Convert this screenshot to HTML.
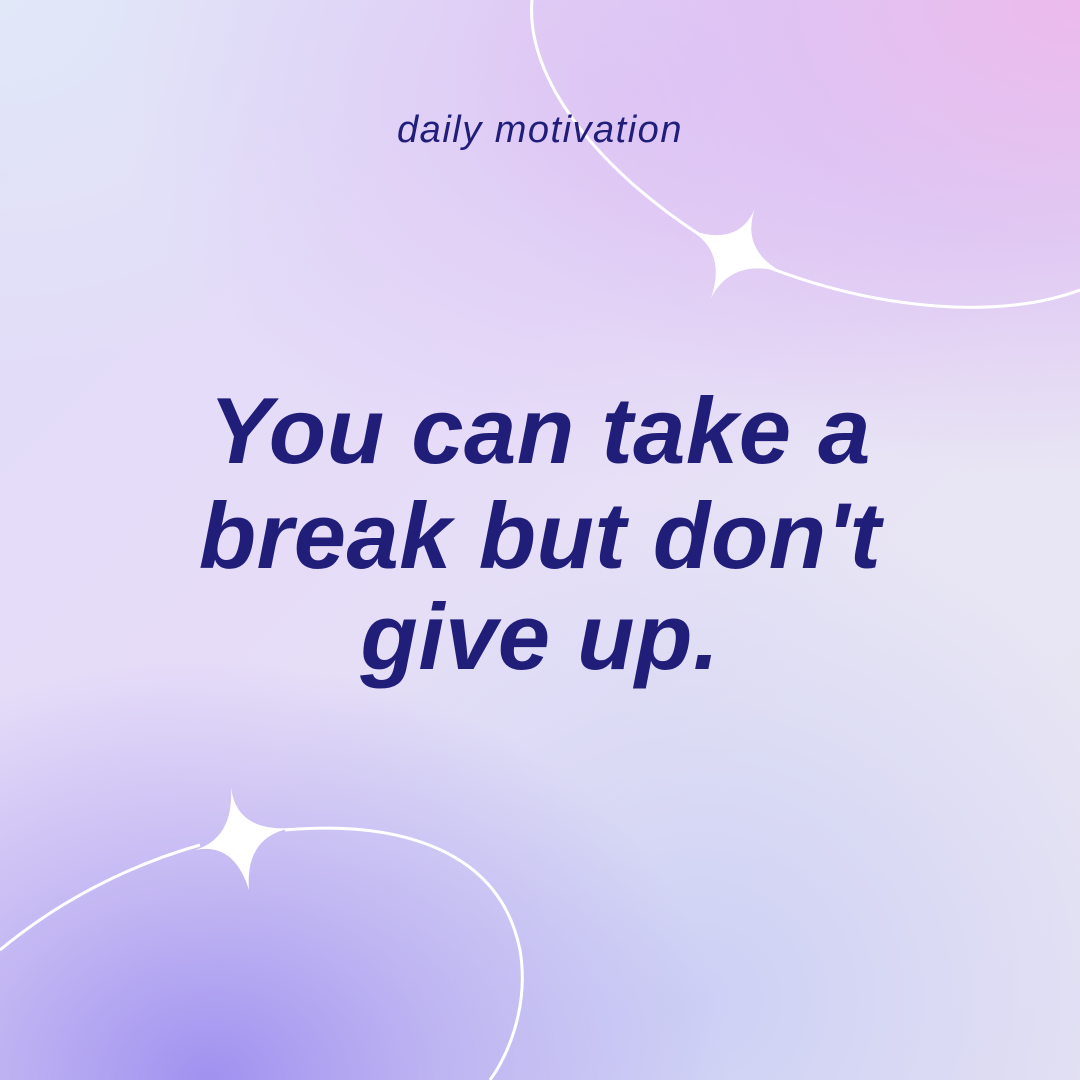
<!DOCTYPE html>
<html><head><meta charset="utf-8"><style>
html,body{margin:0;padding:0}
body{width:1080px;height:1080px;position:relative;overflow:hidden;
background:
radial-gradient(ellipse 520px 420px at 210px 1080px, rgba(160,145,240,1) 0%, rgba(170,155,240,0.6) 45%, rgba(190,180,245,0) 100%),
radial-gradient(ellipse 650px 480px at 1080px 0px, rgba(236,186,236,1) 0%, rgba(222,190,242,0.7) 50%, rgba(225,205,245,0) 100%),
radial-gradient(ellipse 500px 380px at 620px 100px, rgba(220,196,244,0.8) 0%, rgba(220,196,244,0) 100%),
radial-gradient(ellipse 450px 380px at 0px 0px, rgba(225,232,248,1) 0%, rgba(225,225,248,0) 100%),
radial-gradient(ellipse 500px 500px at 700px 1000px, rgba(205,208,245,1) 0%, rgba(205,208,245,0) 100%),
linear-gradient(135deg,#e0dcf8 0%,#e6dcf8 40%,#e8e6f4 70%,#e8e4f2 100%);}
.t{position:absolute;left:0;width:1080px;text-align:center;font-family:"Liberation Sans",sans-serif;color:#211e7a}
.q{font-weight:bold;font-style:italic;font-size:94px;line-height:94px;letter-spacing:0.5px}
</style></head><body>
<svg width="1080" height="1080" style="position:absolute;left:0;top:0">
<path d="M532,0 C525,80 600,170 700,235 M770,268 C880,310 1000,320 1080,290" fill="none" stroke="#fff" stroke-width="3"/>
<path d="M0,950 C60,900 130,865 200,845 M285,830 C400,820 500,850 520,950 C530,1010 505,1060 490,1080" fill="none" stroke="#fff" stroke-width="3"/>
<path d="M757,203 Q738,248 782,272 Q732,258 711,298 Q727,252 690,230 Q742,248 757,203Z" fill="#fff"/>
<path d="M231,787 Q236,832 292,828 Q245,836 249,890 Q234,842 195,850 Q234,838 231,787Z" fill="#fff"/>
</svg>
<div class="t" style="top:111px;font-size:38px;line-height:38px;font-style:italic;letter-spacing:1.5px">daily motivation</div>
<div class="t q" style="top:384px">You can take a</div>
<div class="t q" style="top:489px">break but don't</div>
<div class="t q" style="top:590px">give up.</div>
</body></html>
